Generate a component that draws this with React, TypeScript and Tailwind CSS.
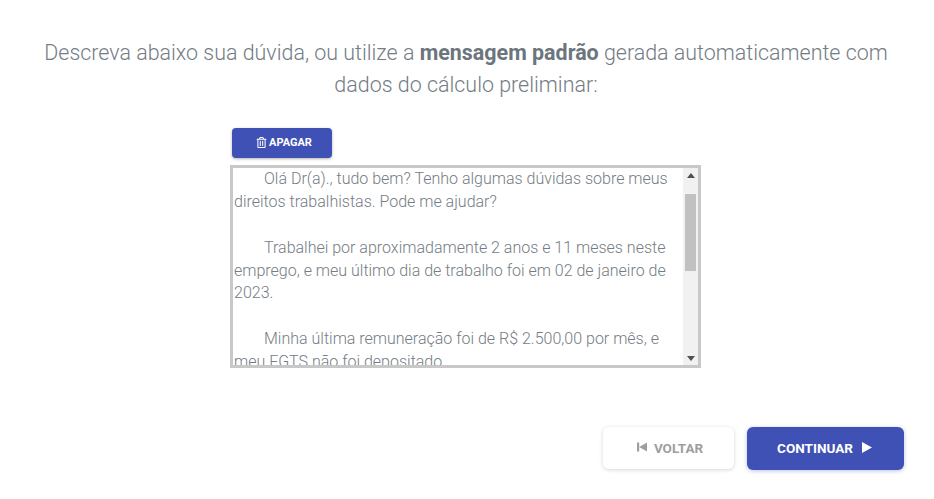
import { FaRegTrashAlt } from "react-icons/fa";

const Scrollbar = () => (
  <div className="w-[15px] shrink-0 flex flex-col items-center bg-[#f1f1f1]">
    <div className="h-[14px] flex items-center justify-center">
      <svg width="8" height="5" viewBox="0 0 8 5"><path d="M4 0 L8 5 L0 5 Z" fill="#505050" /></svg>
    </div>
    <div className="mt-[12px] w-[11px] h-[77px] bg-[#c1c1c1]" />
    <div className="flex-1" />
    <div className="h-[14px] flex items-center justify-center">
      <svg width="8" height="5" viewBox="0 0 8 5"><path d="M0 0 L8 0 L4 5 Z" fill="#505050" /></svg>
    </div>
  </div>
);

const App = () => {
  return (
    <div className="w-[934px] h-[499px] bg-white overflow-hidden flex flex-col font-['Roboto',sans-serif]">
      <h1 className="mt-[37px] ml-[39px] mr-[41px] text-center text-[21.45px] leading-[32px] font-light text-[#747c84]">
        Descreva abaixo sua dúvida, ou utilize a <b className="font-bold text-[#6c757d]">mensagem padrão</b> gerada automaticamente com dados do cálculo preliminar:
      </h1>

      <div className="mt-[27px] ml-[230px] w-[471px]">
        <button className="ml-[2px] w-[100px] h-[30px] pl-[4px] flex items-center justify-center gap-[2px] rounded bg-[#3f51b5] text-white text-[11px] font-bold shadow-[0_1px_3px_rgba(0,0,0,0.3)]">
          <FaRegTrashAlt className="text-[11px] mb-[1px]" />
          APAGAR
        </button>

        <div className="mt-[7px] h-[203px] border-[3px] border-[#c8c8c8] flex">
          <div className="flex-1 overflow-hidden pl-[1px] text-[16px] leading-[22.88px] font-light text-[#747c84]">
            <p className="indent-[30px]">Olá Dr(a)., tudo bem? Tenho algumas dúvidas sobre meus direitos trabalhistas. Pode me ajudar?</p>
            <p className="indent-[30px] mt-[22.88px]">Trabalhei por aproximadamente 2 anos e 11 meses neste emprego, e meu último dia de trabalho foi em 02 de janeiro de 2023.</p>
            <p className="indent-[30px] mt-[22.88px]">Minha última remuneração foi de R$ 2.500,00 por mês, e meu FGTS não foi depositado.</p>
          </div>
          <Scrollbar />
        </div>
      </div>

      <div className="mt-[59px] ml-[603px] flex items-start gap-[13px]">
        <button className="w-[131px] h-[42px] pl-[3px] flex items-center justify-center gap-[7px] rounded-md bg-white text-[#9e9e9e] text-[13.5px] font-bold shadow-[0_1px_4px_rgba(0,0,0,0.16)]">
          <svg width="10" height="10" viewBox="0 0 11 11" className="mb-[3px]"><path d="M0 0.5 H2.4 V10.5 H0 Z M11 0.5 V10.5 L2.4 5.5 Z" fill="#9e9e9e" /></svg>
          VOLTAR
        </button>
        <button className="w-[157px] h-[43px] pr-[2px] flex items-center justify-center gap-[9px] rounded-md bg-[#3f51b5] text-white text-[13.5px] font-bold shadow-[0_1px_4px_rgba(63,81,181,0.35)]">
          CONTINUAR
          <svg width="10" height="11" viewBox="0 0 11 12" className="mb-[3px]"><path d="M0 0 L11 6 L0 12 Z" fill="#ffffff" /></svg>
        </button>
      </div>
    </div>
  );
};

export default App;
